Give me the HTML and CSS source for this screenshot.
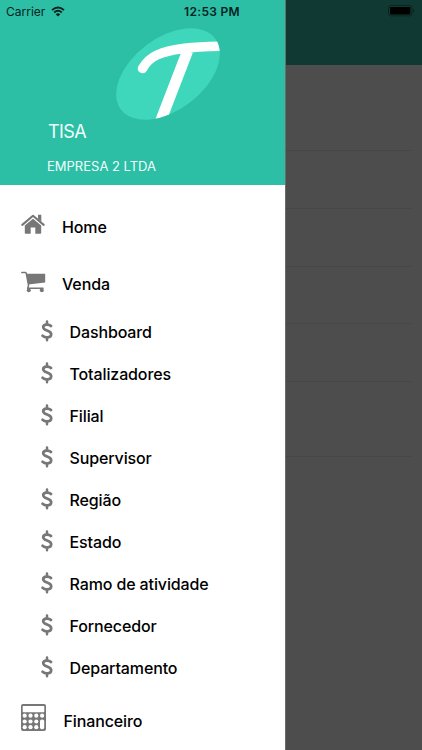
FILE: index.html
```
<!DOCTYPE html>
<html lang="pt-BR">
<head>
    <meta charset="UTF-8">
    <title>TISA</title>
    <link rel="stylesheet" href="styles.css">
</head>
<body>
    <svg class="symbols" width="0" height="0">
        <symbol id="dollar" viewBox="0 0 12 22">
            <path d="M6 1.6V4.4M6 17.4V20.2" stroke="#777" stroke-width="2.5" stroke-linecap="round" fill="none"/>
            <path d="M10 6C8.3 4.2 2.2 3.6 2.2 7.3C2.2 11.2 10.2 10 10.2 14.2C10.2 18.4 3.8 18 1.6 15.8" stroke="#777" stroke-width="2.7" stroke-linecap="round" fill="none"/>
        </symbol>
    </svg>

    <div class="app">
        <div class="page">
            <div class="toolbar"></div>
            <div class="list">
                <div class="list-item tall"></div>
                <div class="list-item"></div>
                <div class="list-item"></div>
                <div class="list-item"></div>
                <div class="list-item"></div>
                <div class="list-item last"></div>
            </div>
        </div>

        <div class="drawer">
            <div class="drawer-header">
                <svg class="logo" viewBox="0 0 106 94" width="106" height="94">
                    <defs>
                        <clipPath id="oval">
                            <ellipse cx="53" cy="47" rx="59" ry="36" transform="rotate(-37 53 47)"/>
                        </clipPath>
                    </defs>
                    <g clip-path="url(#oval)">
                        <rect width="106" height="94" fill="#3fd7bb"/>
                        <path d="M27.5 41.5Q33 32 42 28C57 21.5 78 19.6 110 19.3" fill="none" stroke="#fff" stroke-width="9.5" stroke-linecap="round"/>
                        <path d="M72.6 24L45.6 94" fill="none" stroke="#fff" stroke-width="11"/>
                    </g>
                </svg>
                <div class="user">TISA</div>
                <div class="company">EMPRESA 2 LTDA</div>
            </div>

            <div class="menu">
                <div class="item home">
                    <svg class="icon" viewBox="0 0 24 20" width="24" height="20">
                        <path d="M1.3 10.9L12 1.8L22.7 10.9" fill="none" stroke="#777" stroke-width="2.1" stroke-linecap="round" stroke-linejoin="round"/>
                        <path d="M17 .7h3.3v7L17 4.8z" fill="#777"/>
                        <path d="M12 4.7L20.2 11.6V19q0 .8-.8.8H14.3V13.6H9.7V19.8H4.6q-.8 0-.8-.8V11.6z" fill="#777"/>
                    </svg>
                    <span>Home</span>
                </div>
                <div class="item sale">
                    <svg class="icon" viewBox="0 0 25 22" width="25" height="22">
                        <path d="M.8 1.4H4.4Q5 1.4 5.2 2.2L7.6 14.6L6.6 17.2H22" fill="none" stroke="#777" stroke-width="1.5" stroke-linecap="round" stroke-linejoin="round"/>
                        <path d="M5.3 2.8H24.2V11.5L7.2 13.6z" fill="#777"/>
                        <circle cx="7.8" cy="19.2" r="2" fill="#777"/>
                        <circle cx="20.8" cy="19.2" r="2" fill="#777"/>
                    </svg>
                    <span>Venda</span>
                </div>

                <div class="subitem"><svg class="icon"><use href="#dollar"/></svg><span>Dashboard</span></div>
                <div class="subitem"><svg class="icon"><use href="#dollar"/></svg><span>Totalizadores</span></div>
                <div class="subitem"><svg class="icon"><use href="#dollar"/></svg><span>Filial</span></div>
                <div class="subitem"><svg class="icon"><use href="#dollar"/></svg><span>Supervisor</span></div>
                <div class="subitem"><svg class="icon"><use href="#dollar"/></svg><span>Região</span></div>
                <div class="subitem"><svg class="icon"><use href="#dollar"/></svg><span>Estado</span></div>
                <div class="subitem"><svg class="icon"><use href="#dollar"/></svg><span>Ramo de atividade</span></div>
                <div class="subitem"><svg class="icon"><use href="#dollar"/></svg><span>Fornecedor</span></div>
                <div class="subitem"><svg class="icon"><use href="#dollar"/></svg><span>Departamento</span></div>

                <div class="item finance">
                    <svg class="icon" viewBox="0 0 25 27" width="25" height="27">
                        <rect width="25" height="27" rx="2" fill="#777"/>
                        <rect x="1.7" y="2" width="21.6" height="6.2" rx=".6" fill="#fff"/>
                        <g fill="#fff">
                            <circle cx="3.7" cy="11.7" r="2.1"/>
                            <circle cx="9.5" cy="11.7" r="2.1"/>
                            <circle cx="15.3" cy="11.7" r="2.1"/>
                            <circle cx="21.1" cy="11.7" r="2.1"/>
                            <circle cx="3.7" cy="17.5" r="2.1"/>
                            <circle cx="9.5" cy="17.5" r="2.1"/>
                            <circle cx="15.3" cy="17.5" r="2.1"/>
                            <circle cx="3.7" cy="23.2" r="2.1"/>
                            <circle cx="9.5" cy="23.2" r="2.1"/>
                            <circle cx="15.3" cy="23.2" r="2.1"/>
                            <rect x="19" y="15.5" width="4.2" height="9.8" rx="1.8"/>
                        </g>
                    </svg>
                    <span>Financeiro</span>
                </div>
            </div>
        </div>

        <div class="status-bar">
            <div class="carrier">
                <span>Carrier</span>
                <svg viewBox="0 0 14 11" width="14" height="11">
                    <path d="M1 4.1Q7 -1.3 13 4.1M3.2 6.5Q7 3.2 10.8 6.5" fill="none" stroke="#06231e" stroke-width="1.9"/>
                    <path d="M4.7 8.2Q7 6.3 9.3 8.2L7 10.6z" fill="#06231e"/>
                </svg>
            </div>
            <div class="clock">12:53 PM</div>
            <div class="power">
                <svg viewBox="0 0 27 12" width="27" height="12">
                    <rect x=".5" y=".5" width="23.4" height="10.4" rx="2.7" fill="none" stroke="#09251f"/>
                    <rect x="2" y="2" width="20.4" height="7.4" rx="1.3" fill="#000"/>
                    <path d="M25 4q1.4.4 1.4 1.8T25 7.6z" fill="#09251f"/>
                </svg>
            </div>
        </div>
    </div>
</body>
</html>
```
FILE: styles.css
```
* {
    box-sizing: border-box;
}

body {
    margin: 0;
    font-family: Inter, "Liberation Sans", sans-serif;
    color: #000;
}

.symbols {
    position: absolute;
}

.app {
    position: relative;
    width: 422px;
    height: 750px;
    overflow: hidden;
}

/* page behind the drawer, already dimmed */
.page {
    height: 100%;
    background: #4d4d4d;
}

.toolbar {
    height: 65px;
    background: #0f3932;
}

.list {
    padding-right: 11px;
}

.list-item {
    height: 57.75px;
    border-bottom: 1px solid #464646;
}

.list-item.tall {
    height: 86px;
}

.list-item.last {
    height: 75px;
}

.drawer {
    position: absolute;
    top: 0;
    left: 0;
    width: 285px;
    height: 100%;
    background: #fff;
    box-shadow: 1px 0 0 #6b6b6b;
}

.drawer-header {
    height: 185px;
    padding: 27px 0 0 47px;
    background: #2dbea6;
    color: #effffb;
}

.logo {
    display: block;
    margin-left: 68px;
}

.user {
    padding-left: 1px;
    font-size: 18px;
    letter-spacing: -0.6px;
    line-height: 22px;
}

.company {
    margin-top: 14px;
    font-size: 13px;
    line-height: 18px;
}

.menu {
    padding-top: 13.4px;
    font-size: 16px;
    font-weight: 500;
    letter-spacing: -0.12px;
}

.item,
.subitem {
    display: flex;
    align-items: center;
}

.item {
    height: 57px;
    padding-left: 21px;
}

.item span {
    margin-left: 16px;
}

.home .icon {
    margin-bottom: 6px;
}

.home span {
    margin-left: 17px;
}

.sale .icon {
    margin-bottom: 2px;
}

.sale {
    height: 55.2px;
}

.sale span {
    padding-top: 3px;
}

.subitem {
    height: 42.08px;
    padding-left: 41px;
}

.subitem .icon {
    width: 12px;
    height: 22px;
    margin-bottom: 2px;
}

.subitem span {
    margin-left: 16.5px;
}

.finance {
    height: 63.4px;
}

.finance .icon {
    margin-bottom: 7px;
}

.finance span {
    margin-left: 17.5px;
}

.status-bar {
    position: absolute;
    top: 0;
    left: 0;
    display: flex;
    align-items: center;
    width: 100%;
    height: 22px;
    padding: 0 7px 0 6px;
    font-size: 12px;
    color: #06231e;
}

.carrier,
.power {
    display: flex;
    flex: 1;
    align-items: center;
}

.carrier {
    gap: 6px;
}

.power {
    justify-content: flex-end;
}

.clock {
    padding-left: 3px;
    font-weight: 600;
    letter-spacing: 0.3px;
}
```
